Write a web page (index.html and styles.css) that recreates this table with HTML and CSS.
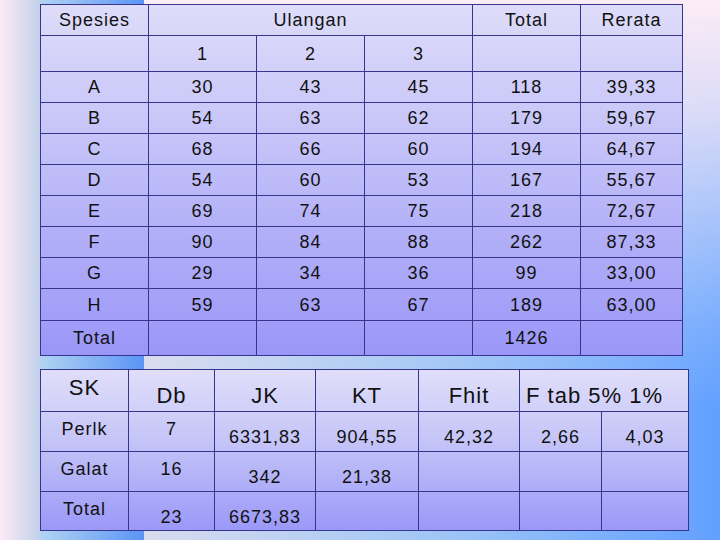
FILE: index.html
```html
<!DOCTYPE html>
<html>
<head>
<meta charset="utf-8">
<link rel="stylesheet" href="styles.css">
</head>
<body>
<div class="slide">
  <table class="grid t1">
    <colgroup>
      <col class="w108"><col class="w108"><col class="w108"><col class="w108"><col class="w108"><col class="w102">
    </colgroup>
    <tr class="r31"><td>Spesies</td><td colspan="3">Ulangan</td><td>Total</td><td>Rerata</td></tr>
    <tr class="r36"><td></td><td>1</td><td>2</td><td>3</td><td></td><td></td></tr>
    <tr class="r31"><td>A</td><td>30</td><td>43</td><td>45</td><td>118</td><td>39,33</td></tr>
    <tr class="r31"><td>B</td><td>54</td><td>63</td><td>62</td><td>179</td><td>59,67</td></tr>
    <tr class="r31"><td>C</td><td>68</td><td>66</td><td>60</td><td>194</td><td>64,67</td></tr>
    <tr class="r31"><td>D</td><td>54</td><td>60</td><td>53</td><td>167</td><td>55,67</td></tr>
    <tr class="r31"><td>E</td><td>69</td><td>74</td><td>75</td><td>218</td><td>72,67</td></tr>
    <tr class="r31"><td>F</td><td>90</td><td>84</td><td>88</td><td>262</td><td>87,33</td></tr>
    <tr class="r31"><td>G</td><td>29</td><td>34</td><td>36</td><td>99</td><td>33,00</td></tr>
    <tr class="r32"><td>H</td><td>59</td><td>63</td><td>67</td><td>189</td><td>63,00</td></tr>
    <tr class="r35"><td>Total</td><td></td><td></td><td></td><td>1426</td><td></td></tr>
  </table>

  <table class="grid t2">
    <colgroup>
      <col class="w88"><col class="w86"><col class="w101"><col class="w103"><col class="w101"><col class="w82"><col class="w87">
    </colgroup>
    <tr class="r42 head">
      <td class="hi">SK</td><td class="lo">Db</td><td class="lo">JK</td><td class="lo">KT</td><td class="lo">Fhit</td><td class="lo left" colspan="2">F tab 5% 1%</td>
    </tr>
    <tr class="r40">
      <td class="hi">Perlk</td><td class="hi">7</td><td class="lo">6331,83</td><td class="lo">904,55</td><td class="lo">42,32</td><td class="lo">2,66</td><td class="lo">4,03</td>
    </tr>
    <tr class="r40">
      <td class="hi">Galat</td><td class="hi">16</td><td class="lo">342</td><td class="lo">21,38</td><td></td><td></td><td></td>
    </tr>
    <tr class="r39">
      <td class="hi">Total</td><td class="lo">23</td><td class="lo">6673,83</td><td></td><td></td><td></td><td></td>
    </tr>
  </table>
</div>
</body>
</html>
```

FILE: styles.css
```css
html, body {
  margin: 0;
  padding: 0;
}
body {
  width: 720px;
  height: 540px;
  overflow: hidden;
  font-family: "Liberation Sans", Arial, sans-serif;
  color: #111;
  background:
    linear-gradient(to right, #fdeaf6, #c2d1ea) 0 0 / 40px 100% no-repeat,
    linear-gradient(to right, #b2d4f2, #5a94f6) 40px 0 / 104px 100% no-repeat,
    linear-gradient(to bottom, rgba(252,236,246,1) 0%, rgba(250,234,246,0.8) 20%, rgba(240,232,246,0.5) 40%, rgba(230,232,246,0.15) 62%, rgba(230,232,246,0) 75%) 144px 0 / 576px 100% no-repeat,
    linear-gradient(to right, #d8dcee 0%, #9cc4f6 55%, #62a0ff 100%) 144px 0 / 576px 100% no-repeat;
}
.slide {
  padding: 4px 0 0 40px;
  display: flex;
  flex-direction: column;
  gap: 13px;
}
.grid {
  border-collapse: collapse;
  table-layout: fixed;
  font-size: 18px;
  letter-spacing: 1px;
  line-height: 20px;
}
.grid td {
  border: 1px solid #36368c;
  text-align: center;
  padding: 0;
  white-space: nowrap;
}
.t1 {
  width: 643px;
  background: linear-gradient(to bottom, #dedcf9 0%, #c4c2f8 40%, #9a96f8 100%);
}
.t1 td {
  vertical-align: middle;
}
.t2 {
  width: 649px;
  background: linear-gradient(to bottom, #e0def9 0%, #c4c4f8 45%, #9a98f8 100%);
}
.t2 td {
  vertical-align: top;
}
.t2 td.hi { padding-top: 7px; }
.t2 td.lo { padding-top: 15px; }
.t2 .head td { font-size: 22px; line-height: 24px; }
.t2 .head td.hi { padding-top: 6px; }
.t2 .head td.lo { padding-top: 14px; }
.t2 td.left { text-align: left; padding-left: 6px; }

.w108 { width: 108px; }
.w102 { width: 102px; }
.w88 { width: 88px; }
.w86 { width: 86px; }
.w101 { width: 101px; }
.w103 { width: 103px; }
.w82 { width: 82px; }
.w87 { width: 87px; }

.r31 { height: 31px; }
.r32 { height: 32px; }
.r35 { height: 35px; }
.r36 { height: 36px; }
.r39 { height: 39px; }
.r40 { height: 40px; }
.r42 { height: 42px; }
```
